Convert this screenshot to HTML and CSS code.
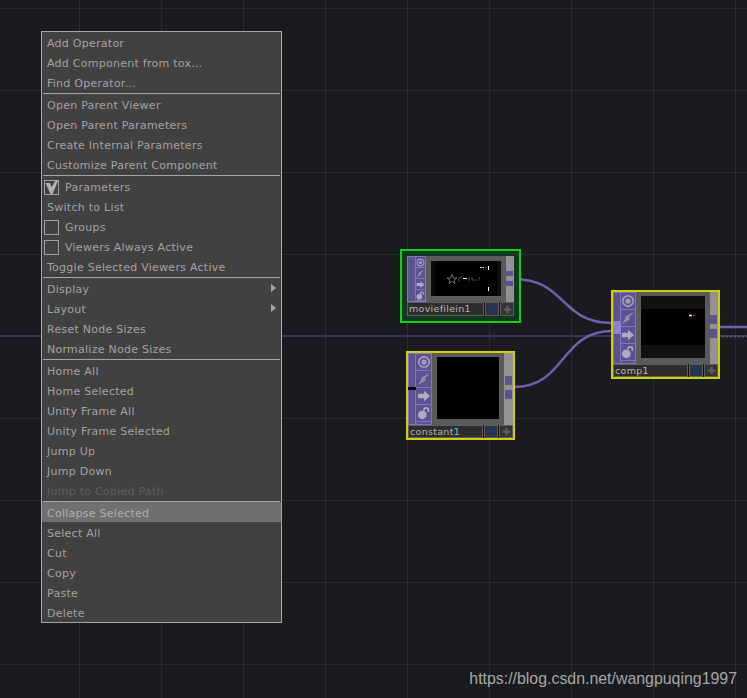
FILE: index.html
```html
<!DOCTYPE html>
<html lang="en">
<head>
    <meta charset="UTF-8">
    <title>Network Editor</title>
    <link rel="stylesheet" href="styles.css">
</head>
<body>
    <svg class="defs" width="0" height="0">
        <symbol id="ic-view" viewBox="0 0 16 16">
            <circle cx="8" cy="8" r="6" fill="none" stroke="#a29cb8" stroke-width="2"/>
            <circle cx="8" cy="8" r="3" fill="#a29cb8"/>
        </symbol>
        <symbol id="ic-bolt" viewBox="0 0 16 16">
            <path d="M15 1L9 7.500L10.500 9L1 15L5.500 7.500L4.500 6.500L9.500 4Z" fill="#948eac"/>
        </symbol>
        <symbol id="ic-arrow" viewBox="0 0 16 16">
            <path d="M1 5.500H8V2L15 8L8 14V10.500H1Z" fill="#aeaac0"/>
        </symbol>
        <symbol id="ic-lock" viewBox="0 0 16 16">
            <circle cx="6" cy="10" r="5" fill="#aeaac0"/>
            <path d="M8 5V4C8 1.500 13 1 13 4.500V6.500" fill="none" stroke="#aeaac0" stroke-width="2"/>
        </symbol>
        <symbol id="ic-plus" viewBox="0 0 12 12">
            <path d="M4.500 1H7.500V4.500H11V7.500H7.500V11H4.500V7.500H1V4.500H4.500Z" fill="#5f5f5f"/>
        </symbol>
    </svg>

    <div class="canvas">
        <svg class="wires" width="747" height="698" viewBox="0 0 747 698">
            <path class="wire-link" d="M0 336H747"/>
            <path class="wire" d="M514 279C566 279 560 323 612 323"/>
            <path class="wire" d="M514 387C566 387 560 331 612 331"/>
            <path class="wire" d="M718 327H747"/>
            <path class="wire-dots" d="M718 336.500H747"/>
        </svg>

        <div class="node node-movie">
            <div class="node-body">
                <div class="inputs"></div>
                <div class="tools">
                    <div class="tool"><svg><use href="#ic-view"/></svg></div>
                    <div class="tool"><svg><use href="#ic-bolt"/></svg></div>
                    <div class="tool"><svg><use href="#ic-arrow"/></svg></div>
                    <div class="tool"><svg><use href="#ic-lock"/></svg></div>
                </div>
                <div class="preview">
                    <svg class="screen" viewBox="0 0 70 35" width="70" height="35">
                        <rect width="70" height="35" fill="#000"/>
                        <rect width="4" height="35" fill="#0c0c0c"/>
                        <rect x="66" width="4" height="35" fill="#0c0c0c"/>
                        <path d="M21 13.500L22.500 17H26L23 19L24 22.500L21 20.500L18 22.500L19 19L16 17H19.500Z" fill="none" stroke="#6c6c6c"/>
                        <path d="M28 21V16H31M38 16V20M41 16V19H45M47 20L49 16" fill="none" stroke="#4a4a4a"/>
                        <path d="M32 17.500H36" stroke="#fff"/>
                        <path d="M49 6.500H50.500M51.500 6.500H53M57.500 5V9M57.500 26V30" stroke="#fff"/>
                        <path d="M54 6.500H55.500" stroke="#d01818"/>
                    </svg>
                </div>
                <div class="outputs">
                    <span class="port"></span>
                    <span class="port"></span>
                </div>
            </div>
            <div class="name-row">
                <div class="name">moviefilein1</div>
                <div class="flag"><span class="dot"></span></div>
                <div class="flag"><svg class="plus"><use href="#ic-plus"/></svg></div>
            </div>
        </div>

        <div class="node node-constant">
            <div class="node-body">
                <div class="inputs"><span class="notch"></span></div>
                <div class="tools">
                    <div class="tool"><svg><use href="#ic-view"/></svg></div>
                    <div class="tool"><svg><use href="#ic-bolt"/></svg></div>
                    <div class="tool"><svg><use href="#ic-arrow"/></svg></div>
                    <div class="tool"><svg><use href="#ic-lock"/></svg></div>
                </div>
                <div class="preview">
                    <div class="screen black"></div>
                </div>
                <div class="outputs">
                    <span class="port"></span>
                    <span class="port"></span>
                </div>
            </div>
            <div class="name-row">
                <div class="name">constant1</div>
                <div class="flag"><span class="dot"></span></div>
                <div class="flag"><svg class="plus"><use href="#ic-plus"/></svg></div>
            </div>
        </div>

        <div class="node node-comp">
            <div class="node-body">
                <div class="inputs"><span class="input-on"></span></div>
                <div class="tools">
                    <div class="tool"><svg><use href="#ic-view"/></svg></div>
                    <div class="tool"><svg><use href="#ic-bolt"/></svg></div>
                    <div class="tool"><svg><use href="#ic-arrow"/></svg></div>
                    <div class="tool"><svg><use href="#ic-lock"/></svg></div>
                </div>
                <div class="preview">
                    <svg class="screen" viewBox="0 0 64 62" width="64" height="62">
                        <rect width="64" height="62" fill="#111"/>
                        <rect y="13" width="64" height="36" fill="#000"/>
                        <path d="M48 19.500H51" stroke="#fff" stroke-width="1.500"/>
                        <path d="M52 19.500H54" stroke="#d01818" stroke-width="1.500"/>
                    </svg>
                </div>
                <div class="outputs">
                    <span class="port"></span>
                    <span class="port"></span>
                </div>
            </div>
            <div class="name-row">
                <div class="name">comp1</div>
                <div class="flag"><span class="dot"></span></div>
                <div class="flag"><svg class="plus"><use href="#ic-plus"/></svg></div>
            </div>
        </div>

        <div class="menu">
            <div class="menu-group">
                <div class="item">Add Operator</div>
                <div class="item">Add Component from tox...</div>
                <div class="item">Find Operator...</div>
            </div>
            <div class="menu-group">
                <div class="item">Open Parent Viewer</div>
                <div class="item">Open Parent Parameters</div>
                <div class="item">Create Internal Parameters</div>
                <div class="item">Customize Parent Component</div>
            </div>
            <div class="menu-group">
                <div class="item check">
                    <span class="box">
                        <svg width="15" height="15" viewBox="0 0 15 15"><path d="M1.500 3H6L7.500 7L12 0H14.500L8.500 14H6.500Z" fill="#b0b0b0"/></svg>
                    </span>
                    Parameters
                </div>
                <div class="item">Switch to List</div>
                <div class="item check"><span class="box"></span>Groups</div>
                <div class="item check"><span class="box"></span>Viewers Always Active</div>
                <div class="item">Toggle Selected Viewers Active</div>
            </div>
            <div class="menu-group">
                <div class="item has-sub">Display</div>
                <div class="item has-sub">Layout</div>
                <div class="item">Reset Node Sizes</div>
                <div class="item">Normalize Node Sizes</div>
            </div>
            <div class="menu-group">
                <div class="item">Home All</div>
                <div class="item">Home Selected</div>
                <div class="item">Unity Frame All</div>
                <div class="item">Unity Frame Selected</div>
                <div class="item">Jump Up</div>
                <div class="item">Jump Down</div>
                <div class="item disabled">Jump to Copied Path</div>
            </div>
            <div class="menu-group last">
                <div class="item active">Collapse Selected</div>
                <div class="item">Select All</div>
                <div class="item">Cut</div>
                <div class="item">Copy</div>
                <div class="item">Paste</div>
                <div class="item">Delete</div>
            </div>
        </div>

        <div class="watermark">https://blog.csdn.net/wangpuqing1997</div>
    </div>
</body>
</html>
```

FILE: styles.css
```css
* {
    margin: 0;
    padding: 0;
    box-sizing: border-box;
}

html, body {
    background: #1a1b1f;
    overflow: hidden;
}

.defs {
    position: absolute;
}

.canvas {
    position: relative;
    width: 747px;
    height: 698px;
    overflow: hidden;
    background-color: #1a1b1f;
    background-image:
        linear-gradient(to right, #2a2b2f 1px, transparent 1px),
        linear-gradient(to bottom, #2a2b2f 1px, transparent 1px);
    background-size: 82px 82px;
    background-position: 79px 8px;
    font-family: "DejaVu Sans", sans-serif;
}

/* wires */
.wires {
    position: absolute;
    left: 0;
    top: 0;
}

.wires path {
    fill: none;
}

.wire {
    stroke: #6f5fae;
    stroke-width: 2.500;
}

.wire-link {
    stroke: #3a3856;
    stroke-width: 2;
}

.wire-dots {
    stroke: #55557a;
    stroke-width: 2;
    stroke-dasharray: 2 2;
}

/* nodes */
.node {
    position: absolute;
    display: flex;
    flex-direction: column;
    border: 2px solid #d0d000;
    background: #222;
}

.node-movie {
    left: 400px;
    top: 249px;
    width: 121px;
    height: 74px;
    padding: 5px;
    border-color: #15d015;
    background: #0f3a1d;
}

.node-constant {
    left: 406px;
    top: 351px;
    width: 109px;
    height: 89px;
}

.node-comp {
    left: 611px;
    top: 290px;
    width: 109px;
    height: 89px;
}

.node-body {
    flex: 1;
    display: flex;
    min-height: 0;
}

.inputs {
    position: relative;
    width: 7px;
    background: #5b5290;
    border: 1px solid #7f73c4;
    border-right: 0;
}

.notch {
    position: absolute;
    left: -1px;
    top: 33px;
    width: 8px;
    height: 3px;
    background: #0a0a0a;
}

.input-on {
    position: absolute;
    left: -1px;
    top: 28px;
    width: 8px;
    height: 13px;
    background: #8d81d0;
}

.tools {
    width: 17px;
    display: flex;
    flex-direction: column;
    background: #5b5290;
    border: 1px solid #7f73c4;
}

.tool {
    height: 17px;
    display: flex;
    align-items: center;
    justify-content: center;
    border-bottom: 1px solid #7f73c4;
}

.tool svg {
    width: 14px;
    height: 14px;
}

.node-movie .inputs {
    width: 8px;
}

.node-movie .tools {
    width: 11px;
}

.node-movie .tool {
    height: 11px;
}

.node-movie .tool svg {
    width: 9px;
    height: 9px;
}

.preview {
    flex: 1;
    display: flex;
    align-items: stretch;
    padding: 4px 5px 6px;
    background: #5a5a5a;
}

.node-movie .preview {
    padding: 5px 5px 6px;
}

.screen {
    display: block;
    flex: 1;
    height: 100%;
}

.black {
    background: #000;
}

.outputs {
    width: 9px;
    display: flex;
    flex-direction: column;
    align-items: center;
    gap: 5px;
    padding-top: 23px;
    background: #929292;
}

.port {
    width: 7px;
    height: 9px;
    background: #5b5290;
}

.node-movie .outputs {
    padding-top: 15px;
    gap: 5px;
}

.node-movie .port {
    height: 5px;
}

.name-row {
    display: flex;
    height: 13px;
    gap: 1px;
    background: #111;
}

.node-movie .name-row {
    height: 14px;
}

.name {
    flex: 1;
    padding-left: 1px;
    border: 1px solid #5e5e5e;
    background: #2d2d2d;
    color: #b4b4b4;
    font-size: 9.500px;
    line-height: 11px;
    letter-spacing: 0.300px;
}

.flag {
    width: 14px;
    display: flex;
    align-items: center;
    justify-content: center;
    border: 1px solid #5e5e5e;
    background: #333;
}

.dot {
    width: 9px;
    height: 9px;
    border-radius: 50%;
    background: #23365f;
}

.plus {
    width: 9px;
    height: 9px;
}

/* context menu */
.menu {
    position: absolute;
    left: 41px;
    top: 31px;
    width: 241px;
    height: 592px;
    border: 1px solid #a5a5a5;
    background: #414141;
    color: #a3a3a3;
    font-size: 11px;
    letter-spacing: 0.260px;
}

.menu-group {
    padding-bottom: 2px;
    position: relative;
}

.menu-group::after {
    content: "";
    position: absolute;
    left: 1px;
    right: 1px;
    bottom: 0;
    height: 1px;
    background: #a5a5a5;
}

.menu-group.last {
    padding-bottom: 0;
}

.menu-group.last::after {
    display: none;
}

.item {
    position: relative;
    display: flex;
    align-items: center;
    height: 20px;
    padding-left: 5px;
    padding-top: 3px;
}

.check {
    padding-left: 2px;
}

.box {
    width: 15px;
    height: 15px;
    margin-right: 6px;
    border: 1px solid #a0a0a0;
    display: block;
}

.box svg {
    display: block;
    margin: -1px;
}

.has-sub::after {
    content: "";
    position: absolute;
    right: 5px;
    top: 6px;
    border-left: 5px solid #a3a3a3;
    border-top: 4px solid transparent;
    border-bottom: 4px solid transparent;
}

.disabled {
    color: #5e5e5e;
}

.active {
    background: #707070;
    color: #b0b0b0;
}

/* csdn stamp over the shot */
.watermark {
    position: absolute;
    right: 10px;
    top: 670px;
    color: #a6a6a6;
    font-family: "Liberation Sans", sans-serif;
    font-size: 15.900px;
    line-height: 18px;
}
```
